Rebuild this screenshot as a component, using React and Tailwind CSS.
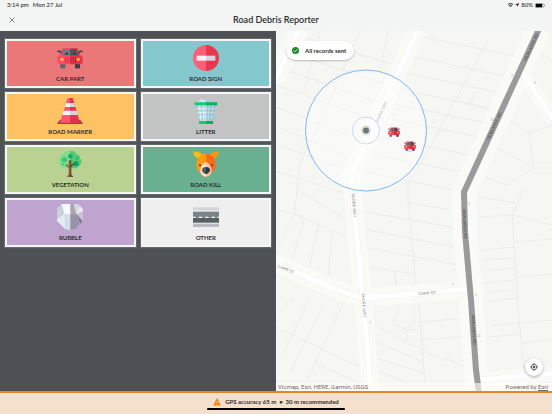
import { useState } from "react";

function CarIcon(props) {
  return (
    <svg viewBox="0 0 78 78" {...props}>
      <path d="M1 19h9l5 10M77 19h-9l-5 10" fill="none" stroke="#3f4a52" strokeWidth="5" />
      <rect x="10" y="56" width="15" height="14" fill="#5b6670" />
      <rect x="54" y="56" width="15" height="14" fill="#333e48" />
      <path d="M17 10h22v24H10z" fill="#f2405c" />
      <path d="M39 10h22l7 24H39z" fill="#cf2e49" />
      <path d="M20 14h19v18H15z" fill="#6f7a83" />
      <path d="M39 14h19l5 18H39z" fill="#4a555f" />
      <path d="M22 29l8-9 5 9zM46 29l8-9 4 9z" fill="#343f49" />
      <path d="M7 31h32v27H6l-5-6V36z" fill="#ff4b67" />
      <path d="M39 31h32l6 5v16l-5 6H39z" fill="#e3344f" />
      <path d="M26 36v18M33 36v18" stroke="#d32c48" strokeWidth="3" />
      <path d="M42 36v18M49 36v18M56 36v18" stroke="#b32640" strokeWidth="3" />
      <circle cx="15" cy="43" r="5" fill="#ffd02f" />
      <circle cx="64" cy="43" r="5" fill="#ffb820" />
    </svg>
  );
}

function SignIcon(props) {
  return (
    <svg viewBox="0 0 78 78" {...props}>
      <path d="M39 0a39 39 0 0 0 0 78z" fill="#ff5d78" />
      <path d="M39 0a39 39 0 0 1 0 78z" fill="#e8384f" />
      <path d="M11 32h28v15H11z" fill="#f0f1f5" />
      <path d="M39 32h28v15H39z" fill="#d6d6de" />
    </svg>
  );
}

function ConeIcon(props) {
  return (
    <svg viewBox="0 0 78 78" {...props}>
      <path d="M1 74h76v4H1z" fill="#56606e" />
      <path d="M8 66h62l6 9H2z" fill="#c72c48" />
      <path d="M32 0h7v74H9z" fill="#ff5471" />
      <path d="M39 0h8l22 74H39z" fill="#e2334f" />
      <path d="M28 15h11v12H23zM19 38h20v13H16z" fill="#f3f3f6" />
      <path d="M39 15h12l4 12H39zM39 38h20l4 13H39z" fill="#d5d6dd" />
    </svg>
  );
}

function BinIcon(props) {
  return (
    <svg viewBox="0 0 78 78" {...props}>
      <path d="M13 14l12-12 10 5 10-7 8 5 10 10z" fill="#cfe6ed" />
      <path d="M39 4l10-4 14 14H39z" fill="#a9cbd6" />
      <path d="M9 20h60l-9 52H18z" fill="#a4ccd7" />
      <path
        d="M19 22l5 48M30 22l3 48M39 22v48M49 22l-4 48M60 22l-6 48M12 32h54M14 44h50M17 57h45"
        stroke="#e3f3f7"
        strokeWidth="3"
      />
      <path d="M39 22h29l-9 50H39z" fill="#6fa9b9" opacity=".3" />
      <path d="M5 13h34v9H5zM18 69h21v9H18z" fill="#10cf70" />
      <path d="M39 13h34v9H39zM39 69h21v9H39z" fill="#04b45c" />
    </svg>
  );
}

function TreeIcon(props) {
  return (
    <svg viewBox="0 0 78 78" {...props}>
      <path d="M39 1c-8-3-15 0-18 7-8 1-13 7-12 14-6 6-5 17 2 22 6 8 18 10 28 6z" fill="#7be08c" />
      <path d="M39 1c8-3 15 0 18 7 8 1 13 7 12 14 6 6 5 17-2 22-6 8-18 10-28 6z" fill="#55c878" />
      <circle cx="22" cy="26" r="8" fill="#43c07a" />
      <circle cx="40" cy="16" r="7" fill="#1aa866" />
      <circle cx="57" cy="38" r="8" fill="#0da260" />
      <circle cx="17" cy="40" r="3" fill="#39bc73" />
      <circle cx="60" cy="22" r="4" fill="#2eb26c" />
      <path d="M39 28h-4v16l-8-5-2 3 10 9v19l-6 8h10z" fill="#94603c" />
      <path d="M39 28h4v14l7-6 2 3-9 10v21l6 8H39z" fill="#70452b" />
    </svg>
  );
}

function KangarooIcon(props) {
  return (
    <svg viewBox="0 0 78 78" {...props}>
      <path d="M0 2c14-1 27 4 30 14l-12 7C8 20 1 13 0 2z" fill="#ffbd0f" />
      <path d="M78 2C64 1 51 6 48 16l12 7c10-3 17-10 18-21z" fill="#ff9411" />
      <path d="M39 8C20 8 10 24 10 42c0 13 8 20 14 26 5 5 9 9 15 9z" fill="#ff9a12" />
      <path d="M39 8c19 0 29 16 29 34 0 13-8 20-14 26-5 5-9 9-15 9z" fill="#ff6a1a" />
      <path d="M39 32c-9 4-17 17-17 28 0 9 9 17 17 17z" fill="#ffe0c2" />
      <path d="M39 32c9 4 17 17 17 28 0 9-9 17-17 17z" fill="#ffc49d" />
      <path d="M39 48c-7 0-12 4-12 9s6 12 12 12z" fill="#4b5866" />
      <path d="M39 48c7 0 12 4 12 9s-6 12-12 12z" fill="#2c3744" />
      <circle cx="21" cy="43" r="3" fill="#3d3a3c" />
      <circle cx="57" cy="43" r="3" fill="#3d3a3c" />
    </svg>
  );
}

function RockIcon(props) {
  return (
    <svg viewBox="0 0 78 78" {...props}>
      <path d="M14 0h49l15 16v36L56 75l-16 3-16-3L0 50V16z" fill="#dbe1ec" />
      <path d="M14 0h26v31H22z" fill="#f7f8fb" />
      <path d="M14 0l8 31L0 46V16z" fill="#c9cedb" />
      <path d="M0 46l22-15 3 44L0 50z" fill="#e4ebf3" />
      <path d="M22 31h18v47l-16-3z" fill="#d3dde9" />
      <path d="M40 0h10l8 30-18 1z" fill="#aaa3b5" />
      <path d="M50 0h13l6 7-11 23z" fill="#d8d4df" />
      <path d="M69 7l9 9v6L58 30z" fill="#eceaf0" />
      <path d="M78 22v30L58 30z" fill="#c9c3d1" />
      <path d="M58 30l20 22-9 9z" fill="#847b93" />
      <path d="M40 31l18-1 11 31-13 14-16 3z" fill="#9991a6" />
    </svg>
  );
}

function RoadIcon(props) {
  return (
    <svg viewBox="0 0 78 78" {...props}>
      <path d="M0 10h78v9H0z" fill="#d5d3da" />
      <path d="M0 23h78v17H0z" fill="#7a8387" />
      <path d="M0 40h78v16H0z" fill="#566063" />
      <path d="M0 59h78v10H0z" fill="#bdb9c3" />
      <path d="M0 40h8M17 40h11M36 40h11M55 40h11M73 40h5" stroke="#f1f1f4" strokeWidth="4" />
    </svg>
  );
}

const categories = [
  { label: "CAR PART", color: "bg-[#ea7878]", Icon: CarIcon },
  { label: "ROAD SIGN", color: "bg-[#84c8ce]", Icon: SignIcon },
  { label: "ROAD MARKER", color: "bg-[#fdc263]", Icon: ConeIcon },
  { label: "LITTER", color: "bg-[#c2c3c3]", Icon: BinIcon },
  { label: "VEGETATION", color: "bg-[#b9d292]", Icon: TreeIcon },
  { label: "ROAD KILL", color: "bg-[#69b090]", Icon: KangarooIcon },
  { label: "RUBBLE", color: "bg-[#bfa4d0]", Icon: RockIcon },
  { label: "OTHER", color: "bg-[#efefef]", Icon: RoadIcon },
];

// property boundaries, drawn as thin lines under the streets
const parcels = [
  "M22 4l96 30M14 22l96 31M8 38l94 34M0 54l84 30M0 76l72 28M0 95l66 28M0 113l64 24M0 140l68 22",
  "M44 0L28 60M84 0L38 104M38 104L24 132l-4 30M112 0l-8 40",
  "M0 178l18 5 50 22M18 183l3-24 46 27M18 183L0 222M28 189l-12 40M42 194l-9 43M56 201l-4 45",
  "M148 6l96 20M138 26l96 20M130 42l96 20M122 58l96 20M114 72l96 20M106 86l96 20M96 104l98 20M88 122l102 20M84 140l98 20",
  "M212 8l-52 98-28 48v15l8 85",
  "M90 181l90 16M91 199l87 17M93 217l89 17M94 236l44 7M119 241l1 15M132 172l45 7",
  "M0 296l83 40M17 266L0 286M33 269L5 326M48 272L14 342M67 272L31 350M40 332l38 18",
  "M100 295l68 35 2-3 24 12M101 311l46 20M102 328l46 14M106 341l28 12M143 273l6 80M144 291l44-4M146 309l44-4",
  "M122 275v8l-4 5 1 6 12 5 11-1M131 299v11M138 274v18l-9 6",
  "M203 166l37 6M204 186l32-2 5 70M248 159l-12 25 40 10M238 211l38-3M206 219l32-3M207 229l32-2M208 240l32-3M241 246l35-3M209 252l29-3M210 262l28-3",
  "M233 89l20 14 23-9M253 103l5 34h18M205 126l15-10 38 21M200 142l30 12 28-17",
  "M212 270l29-3v-14M241 267l8 82M214 295l30-3M215 306l30-3M244 292l32-3M246 312l30-3",
  "M198 60l-3 13 19 6M262 20l14 10",
];

const houseNumbers = [
  { x: 193, y: 173, n: "2" },
  { x: 177, y: 254, n: "2" },
  { x: 200, y: 264, n: "5" },
  { x: 203, y: 305, n: "11" },
  { x: 94, y: 292, n: "5" },
  { x: 236, y: 45, n: "2" },
  { x: 259, y: 52, n: "8" },
  { x: 216, y: 89, n: "15" },
];

function StreetMap() {
  return (
    <svg
      className="absolute inset-0 size-full"
      viewBox="0 0 276 360"
      preserveAspectRatio="xMidYMid slice"
      fontFamily="'Liberation Sans', sans-serif"
      role="img"
      aria-label="Map of nearby streets"
    >
      <rect width="276" height="360" fill="#f6f7f2" />
      <g fill="none" stroke="#ecede9">
        {parcels.map((d) => (
          <path key={d} d={d} />
        ))}
      </g>
      <g fill="none" strokeLinejoin="round">
        <g stroke="#fafaf7" strokeWidth="18">
          <path d="M24-2L-2 51" />
          <path d="M142-2L75 144l2 25 10 98 8 95" />
          <path d="M-4 231l54 23 28 11 10 2 106-9" />
          <path d="M263-2l-75 163 1 40 6 68 5 70 3 23" strokeWidth="24" />
          <path d="M246 41l32 48M203 349l75-7" strokeWidth="14" />
        </g>
        <g stroke="#f1f1ef" strokeWidth="6">
          <path d="M24-2L-2 51" />
          <path d="M142-2L75 144l2 25 10 98 8 95" />
          <path d="M-4 231l54 23 28 11 10 2 106-9" />
          <path d="M246 41l32 48M203 349l75-7" />
        </g>
        <g stroke="#ffffff" strokeWidth="5">
          <path d="M24-2L-2 51" />
          <path d="M142-2L75 144l2 25 10 98 8 95" />
          <path d="M-4 231l54 23 28 11 10 2 106-9" />
          <path d="M246 41l32 48M203 349l75-7" />
        </g>
        <path d="M263-2l-75 163 1 40 6 68 5 70 3 23" stroke="#9b9b9b" strokeWidth="6" />
      </g>
      <g fontSize="4" fill="#7d7d7d" textAnchor="middle" dominantBaseline="central">
        <text transform="translate(105 81) rotate(-65)">SHORE GRV</text>
        <text transform="translate(78 174) rotate(85)">SHORE GRV</text>
        <text transform="translate(88 274) rotate(86)">SHORE GRV</text>
        <text transform="translate(10 238) rotate(22)">CARR ST</text>
        <text transform="translate(151 262) rotate(-4)">CARR ST</text>
        <g fill="#444444">
          <text transform="translate(218 95) rotate(-65)">NEWLANDS RD</text>
          <text transform="translate(189 193) rotate(87)">NEWLANDS RD</text>
          <text transform="translate(198 299) rotate(87)">NEWLANDS RD</text>
          <text transform="translate(255 16) rotate(-65)">NEWLANDS RD</text>
        </g>
        <g fontSize="3" fill="#a3a3a3">
          {houseNumbers.map(({ x, y, n }) => (
            <text key={`${x}-${y}`} x={x} y={y}>
              {n}
            </text>
          ))}
        </g>
      </g>
      <circle cx="90" cy="99.500" r="60.500" fill="#ffffff" fillOpacity=".4" stroke="#7fb6f5" />
      <circle cx="90" cy="99.500" r="13.500" fill="#ffffff" fillOpacity=".2" stroke="#c3dcf6" />
      <circle cx="90" cy="99.500" r="5" fill="#dcdcdc" />
      <circle cx="90" cy="99.500" r="3" fill="#747474" />
      <CarIcon x="112" y="95" width="12" height="12" />
      <circle cx="134" cy="117" r="4" fill="#d3d8e4" />
      <CarIcon x="128" y="109" width="12" height="12" />
    </svg>
  );
}

function StatusBar() {
  return (
    <div className="flex items-center justify-between px-[7px] text-[6px] leading-[10px] font-medium">
      <div className="flex gap-1">
        <span>3:14 pm</span>
        <span>Mon 27 Jul</span>
      </div>
      <div className="flex items-center gap-[2px]">
        <svg className="h-1 w-[5px]" viewBox="0 0 10 8" fill="none" stroke="#222" strokeWidth="2">
          <path d="M0 3a7 7 0 0 1 10 0M2.500 5.500a3.500 3.500 0 0 1 5 0" />
          <circle cx="5" cy="7" r=".6" />
        </svg>
        <svg className="size-1" viewBox="0 0 8 8" fill="#222">
          <path d="M8 0L5 8 4 4 0 3z" />
        </svg>
        <span>80%</span>
        <svg className="h-[5px] w-[10px]" viewBox="0 0 20 10">
          <rect x=".5" y=".5" width="17" height="9" rx="2" fill="none" stroke="#888" />
          <rect x="1.500" y="1.500" width="13" height="7" rx="1" fill="#000" />
          <path d="M19 3.500q1 1.500 0 3z" fill="#888" stroke="#888" />
        </svg>
      </div>
    </div>
  );
}

function App() {
  const [selected, setSelected] = useState(null);

  return (
    <div className="flex min-h-screen flex-col bg-[#4d5156] font-['Lato',sans-serif] text-[#2d2d2d]">
      <header className="h-[31px] bg-[#f3f5f5]">
        <StatusBar />
        <div className="grid grid-cols-[24px_1fr_24px] items-center">
          <button
            type="button"
            aria-label="Close"
            className="flex h-5 items-center justify-center"
          >
            <svg className="size-[6px]" viewBox="0 0 6 6" stroke="#555" strokeWidth=".7">
              <path d="M.5.5l5 5M5.500.5l-5 5" />
            </svg>
          </button>
          <h1 className="text-center text-[9px] leading-5 font-semibold">Road Debris Reporter</h1>
        </div>
      </header>

      <main className="grid flex-1 grid-cols-2">
        <section className="px-[5px] pt-2" aria-label="Debris type">
          <div className="grid grid-cols-2 gap-x-[5px] gap-y-1">
            {categories.map(({ label, color, Icon }) => (
              <button
                key={label}
                type="button"
                aria-pressed={selected === label}
                onClick={() => setSelected(label)}
                className={`flex flex-col items-center border-2 border-[#f5f7f7] pt-1 pb-[3px] shadow-[0_0_1px_1px_#66696c] ${color}`}
              >
                <Icon className="size-[26px]" />
                <span className="mt-1 text-[6px] leading-2 font-bold">{label}</span>
              </button>
            ))}
          </div>
        </section>

        <section className="relative flex flex-col justify-between overflow-hidden" aria-label="Map">
          <StreetMap />
          <div
            role="status"
            className="relative mt-[10px] ml-[10px] flex h-[19px] items-center gap-[6px] self-start rounded-full bg-white pr-2 pl-[6px] shadow-[0_1px_2px_rgba(0,0,0,0.25)]"
          >
            <svg className="size-[7px]" viewBox="0 0 14 14">
              <circle cx="7" cy="7" r="7" fill="#218a21" />
              <path d="M3.500 7.200l2.500 2.500 4.500-5" fill="none" stroke="#fff" strokeWidth="1.600" />
            </svg>
            <span className="text-[6px] leading-[10px] font-bold">All records sent</span>
          </div>
          <div className="relative">
            <button
              type="button"
              aria-label="Go to my location"
              className="mr-[9px] mb-[7px] ml-auto flex size-[18px] items-center justify-center rounded-full bg-white shadow-[0_1px_3px_rgba(0,0,0,0.35)]"
            >
              <svg className="size-2" viewBox="0 0 16 16" fill="none" stroke="#444" strokeWidth="1.500">
                <circle cx="8" cy="8" r="5.500" />
                <path d="M8 0v3M8 13v3M0 8h3M13 8h3" />
                <circle cx="8" cy="8" r="2" fill="#444" />
              </svg>
            </button>
            <div className="flex justify-between bg-white/60 px-[2px] font-['Roboto','Liberation_Sans',sans-serif] text-[6px] leading-2 text-[#6b6b6b]">
              <span>Vicmap, Esri, HERE, Garmin, USGS</span>
              <span className="pr-[2px]">
                Powered by{" "}
                <a href="#esri" className="underline">
                  Esri
                </a>
              </span>
            </div>
          </div>
        </section>
      </main>

      <footer className="flex flex-col items-center border-t-2 border-[#e08a26] bg-[#f4e0cc] pt-1 pb-1">
        <div className="flex items-center gap-1">
          <svg className="size-2" viewBox="0 0 16 16">
            <path d="M8 1l7 13.500H1z" fill="#f0860c" stroke="#f0860c" strokeLinejoin="round" />
            <path d="M8 6v4M8 11.500v1.500" stroke="#fbe6cf" strokeWidth="1.500" />
          </svg>
          <p className="text-[6px] leading-[10px] font-bold">
            GPS accuracy 65 m &nbsp;•&nbsp; 30 m recommended
          </p>
        </div>
        <div className="mt-px h-[2px] w-1/4 rounded-full bg-black" />
      </footer>
    </div>
  );
}

export default App;
